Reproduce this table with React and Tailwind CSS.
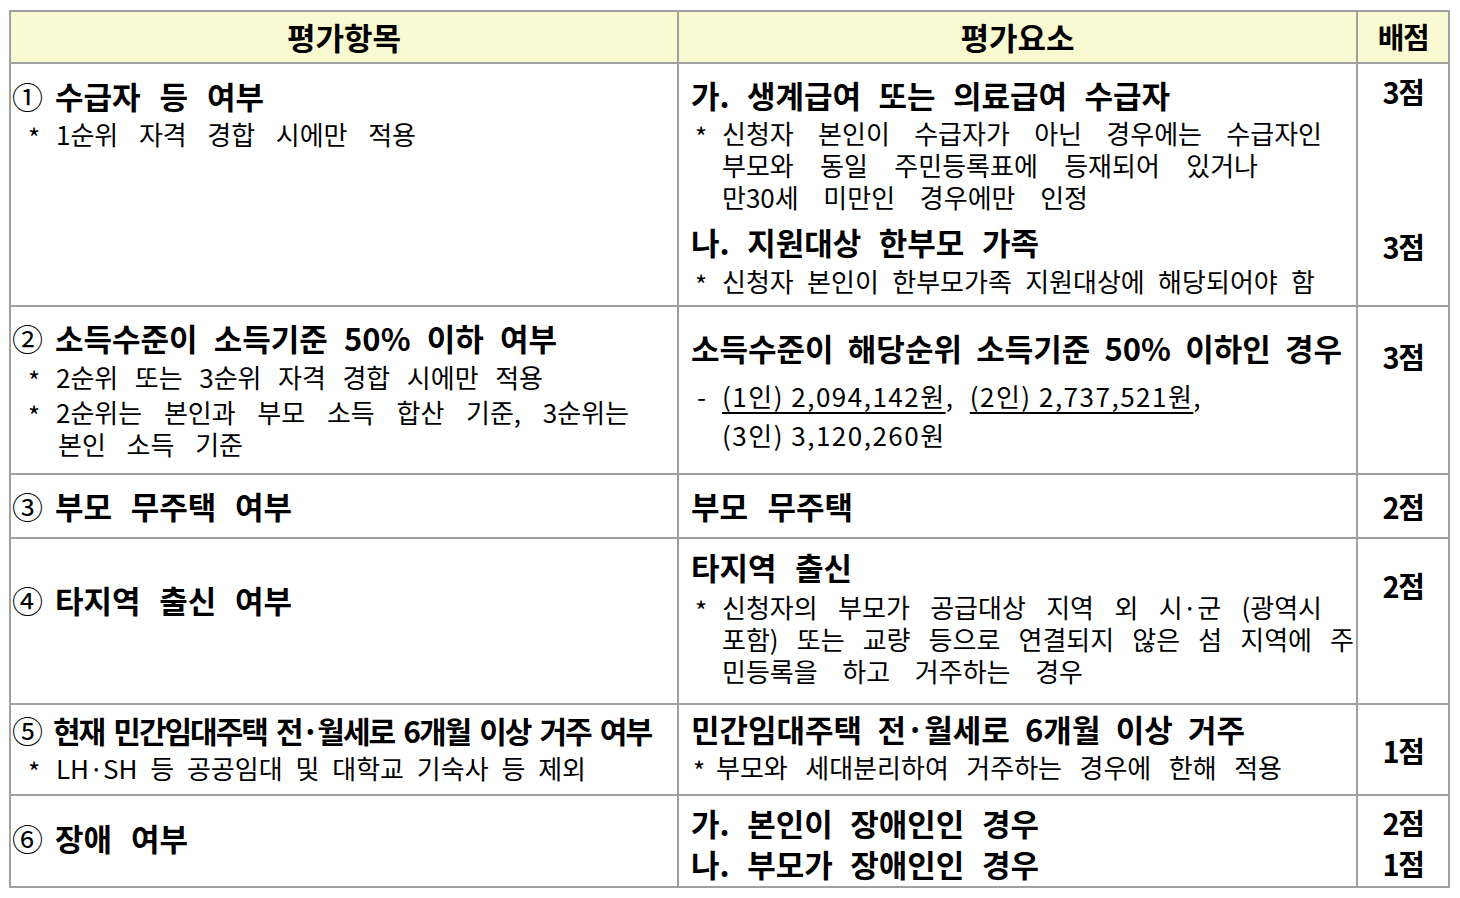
import React from "react";

/* 평가항목 / 평가요소 / 배점 scoring table
   lines are justified to the widths of the source document */

const edge = "border-r-2 border-b-2 border-[#a0a0a0]";
const just = "text-justify [text-align-last:justify]";

function Title({ num, children, className = "", textClass = "" }) {
  if (num) {
    return (
      <div className={`flex text-[31px] font-bold leading-[36px] ${className}`}>
        <span className="w-[30px] shrink-0 font-normal">{num}</span>
        <div className={`${just} ${textClass}`}>{children}</div>
      </div>
    );
  }
  return (
    <div className={`text-[31px] font-bold leading-[36px] ${just} ${className}`}>
      {children}
    </div>
  );
}

// note with a hanging "*" mark; lines = [[text, widthClass], ...]
function Note({ lines, markClass = "w-[28px]", className = "" }) {
  return (
    <div className={`flex text-[26px] leading-[32px] ${className}`}>
      <span className={`shrink-0 translate-y-[3px] ${markClass}`}>*</span>
      <div>
        {lines.map(([text, w]) => (
          <div key={text} className={`${just} ${w}`}>{text}</div>
        ))}
      </div>
    </div>
  );
}

function Score({ children, className = "" }) {
  return (
    <div className={`text-center text-[29px] font-bold leading-[36px] tracking-[-1.5px] ${className}`}>
      {children}
    </div>
  );
}

export default function App() {
  return (
    <div className="min-h-screen bg-white pl-[9px] pt-[10px] text-black font-['Noto_Sans_CJK_KR','Noto_Sans_KR',sans-serif]">
      <div className="grid w-[1441px] grid-cols-[668px_679px_92px] grid-rows-[52px_243px_168px_64px_166px_91px_92px] border-l-2 border-t-2 border-[#a0a0a0]">
        {/* header */}
        <div className={`${edge} flex items-center justify-center bg-[#fafad2] text-[31px] font-bold`}>평가항목</div>
        <div className={`${edge} flex items-center justify-center bg-[#fafad2] text-[31px] font-bold`}>평가요소</div>
        <div className={`${edge} flex items-center justify-center bg-[#fafad2] text-[29px] font-bold tracking-[-1.5px]`}>배점</div>

        {/* ① */}
        <div className={`${edge} pl-px pt-[14px]`}>
          <Title num="①" textClass="ml-[13px] w-[209px]">수급자 등 여부</Title>
          <Note className="mt-[4px] pl-[16px]" lines={[["1순위 자격 경합 시에만 적용", "w-[360px]"]]} />
        </div>
        <div className={`${edge} pl-[12px] pt-[13px]`}>
          <Title className="w-[479px]">가. 생계급여 또는 의료급여 수급자</Title>
          <Note
            className="mt-[4px] pl-[4px]"
            markClass="w-[27px]"
            lines={[
              ["신청자 본인이 수급자가 아닌 경우에는 수급자인", "w-[600px]"],
              ["부모와 동일 주민등록표에 등재되어 있거나", "w-[536px]"],
              ["만30세 미만인 경우에만 인정", "w-[366px]"],
            ]}
          />
          <Title className="mt-[11px] w-[348px]">나. 지원대상 한부모 가족</Title>
          <Note
            className="mt-[5px] pl-[4px]"
            markClass="w-[27px]"
            lines={[["신청자 본인이 한부모가족 지원대상에 해당되어야 함", "w-[593px]"]]}
          />
        </div>
        <div className={`${edge} pt-[9px]`}>
          <Score>3점</Score>
          <Score className="mt-[119px]">3점</Score>
        </div>

        {/* ② */}
        <div className={`${edge} pl-px pt-[13px]`}>
          <Title num="②" textClass="ml-[13px] w-[502px]">소득수준이 소득기준 50% 이하 여부</Title>
          <Note className="mt-[5px] pl-[16px]" lines={[["2순위 또는 3순위 자격 경합 시에만 적용", "w-[487px]"]]} />
          <Note
            className="mt-[3px] pl-[16px]"
            lines={[
              ["2순위는 본인과 부모 소득 합산 기준, 3순위는", "w-[573px]"],
              ["본인 소득 기준", "w-[187px] pl-[2px]"],
            ]}
          />
        </div>
        <div className={`${edge} pl-[12px] pt-[23px]`}>
          <Title className="w-[651px]">소득수준이 해당순위 소득기준 50% 이하인 경우</Title>
          <div className="mt-[10px] flex pl-[6px] text-[26px] leading-[39px] tracking-[1.5px]">
            <span className="w-[25px] shrink-0">-</span>
            <div>
              <div className="whitespace-nowrap">
                <span className="underline decoration-2 underline-offset-[5px]">(1인) 2,094,142원</span>,{" "}
                <span className="ml-[8px] underline decoration-2 underline-offset-[5px]">(2인) 2,737,521원</span>,
              </div>
              <div className="whitespace-nowrap">(3인) 3,120,260원</div>
            </div>
          </div>
        </div>
        <div className={`${edge} pt-[31px]`}>
          <Score>3점</Score>
        </div>

        {/* ③ */}
        <div className={`${edge} flex items-center pl-px`}>
          <Title num="③" textClass="ml-[13px] w-[237px]">부모 무주택 여부</Title>
        </div>
        <div className={`${edge} flex items-center pl-[12px]`}>
          <Title className="w-[162px]">부모 무주택</Title>
        </div>
        <div className={`${edge} flex items-center justify-center`}>
          <Score>2점</Score>
        </div>

        {/* ④ */}
        <div className={`${edge} pl-px pt-[43px]`}>
          <Title num="④" textClass="ml-[13px] w-[237px]">타지역 출신 여부</Title>
        </div>
        <div className={`${edge} pl-[12px] pt-[10px]`}>
          <Title className="w-[161px]">타지역 출신</Title>
          <Note
            className="mt-[6px] pl-[4px]"
            markClass="w-[27px]"
            lines={[
              ["신청자의 부모가 공급대상 지역 외 시·군 (광역시", "w-[600px]"],
              ["포함) 또는 교량 등으로 연결되지 않은 섬 지역에 주", "w-[632px]"],
              ["민등록을 하고 거주하는 경우", "w-[361px]"],
            ]}
          />
        </div>
        <div className={`${edge} pt-[28px]`}>
          <Score>2점</Score>
        </div>

        {/* ⑤ */}
        <div className={`${edge} pl-px pt-[7px]`}>
          <Title num="⑤" textClass="ml-[11px] w-[598px] whitespace-nowrap text-[30px] tracking-[-2px]">
            현재 민간임대주택 전·월세로 6개월 이상 거주 여부
          </Title>
          <Note className="mt-[4px] pl-[16px]" lines={[["LH·SH 등 공공임대 및 대학교 기숙사 등 제외", "w-[530px]"]]} />
        </div>
        <div className={`${edge} pl-[12px] pt-[6px]`}>
          <Title className="w-[554px]">민간임대주택 전·월세로 6개월 이상 거주</Title>
          <Note
            className="mt-[4px] pl-[2px]"
            markClass="w-[23px]"
            lines={[["부모와 세대분리하여 거주하는 경우에 한해 적용", "w-[566px]"]]}
          />
        </div>
        <div className={`${edge} flex items-center justify-center`}>
          <Score>1점</Score>
        </div>

        {/* ⑥ */}
        <div className={`${edge} pl-px pt-[24px]`}>
          <Title num="⑥" textClass="ml-[13px] w-[133px]">장애 여부</Title>
        </div>
        <div className={`${edge} pl-[12px] pt-[6px]`}>
          <Title className="w-[348px] leading-[41px]">가. 본인이 장애인인 경우</Title>
          <Title className="w-[348px] leading-[41px]">나. 부모가 장애인인 경우</Title>
        </div>
        <div className={`${edge} pt-[6px]`}>
          <Score className="leading-[41px]">2점</Score>
          <Score className="leading-[41px]">1점</Score>
        </div>
      </div>
    </div>
  );
}
